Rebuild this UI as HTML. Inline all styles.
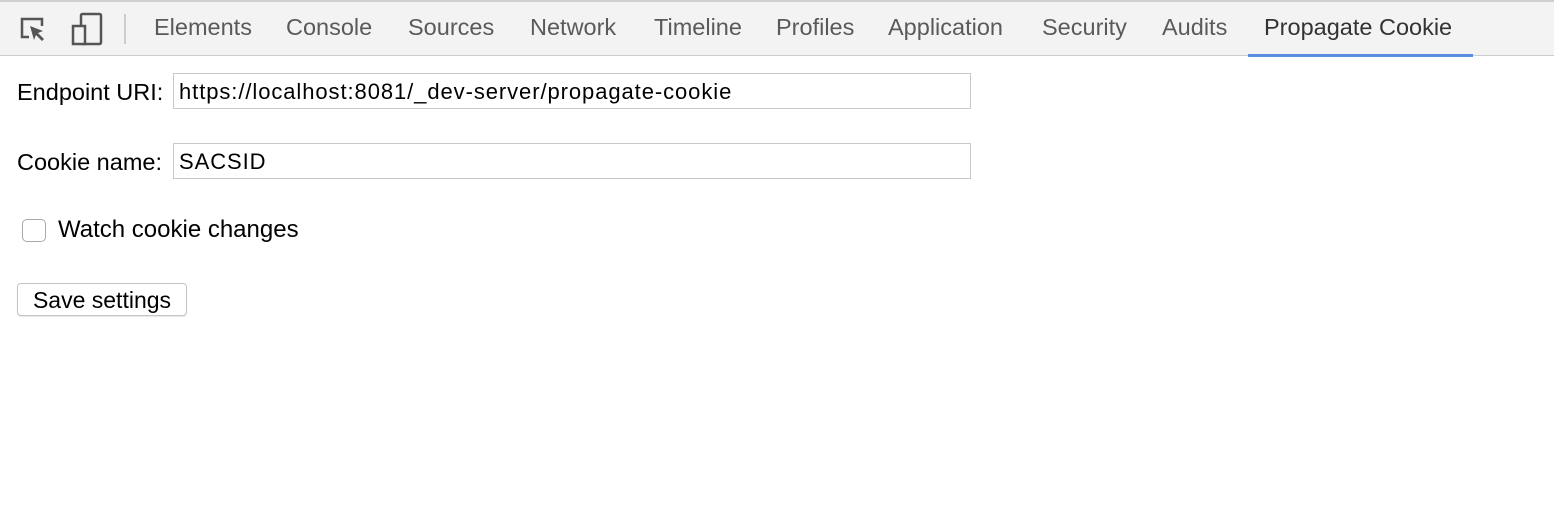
<!DOCTYPE html>
<html><head><style>
body{margin:0;width:1554px;height:510px;background:#fff;font-family:"Liberation Sans",sans-serif;position:relative;overflow:hidden;color:#000}
.bar{position:absolute;left:0;top:0;width:1554px;height:53px;background:#f3f3f3;border-top:2px solid #d0d0d0;border-bottom:1px solid #cdcdcd;box-sizing:content-box}
.t{position:absolute;top:12px;font-size:23.5px;color:#5a5a5a;white-space:nowrap}
.a{color:#333}
.ul{position:absolute;left:1248px;top:52px;width:225px;height:3px;background:#5a8fe0}
.l{position:absolute;font-size:23.5px;white-space:nowrap}
.in{position:absolute;left:173px;width:798px;height:36px;border:1px solid #c8c8c8;box-sizing:border-box;font-size:22px;letter-spacing:0.92px;padding:6px 5px;line-height:24px;white-space:nowrap}
</style></head><body>
<div class="bar">
<svg style="position:absolute;left:18px;top:12px" width="32" height="32" viewBox="0 0 32 32"><path d="M11 23H4V5h20v7" fill="none" stroke="#555" stroke-width="2.5"/><path d="M12 12l13 5-5 2 6 6-2 2-6-6-2 5z" fill="#555"/></svg>
<svg style="position:absolute;left:70px;top:10px" width="34" height="36" viewBox="0 0 34 36"><rect x="11" y="2" width="20" height="30" rx="1.5" fill="none" stroke="#555" stroke-width="2.5"/><rect x="3" y="14" width="12" height="18" fill="#f3f3f3" stroke="#555" stroke-width="2.5"/></svg>
<div style="position:absolute;left:124px;top:12px;width:2px;height:30px;background:#ccc"></div>
<span class="t" style="left:154px">Elements</span>
<span class="t" style="left:286px">Console</span>
<span class="t" style="left:408px">Sources</span>
<span class="t" style="left:530px">Network</span>
<span class="t" style="left:654px">Timeline</span>
<span class="t" style="left:776px">Profiles</span>
<span class="t" style="left:888px">Application</span>
<span class="t" style="left:1042px">Security</span>
<span class="t" style="left:1162px">Audits</span>
<span class="t a" style="left:1264px">Propagate Cookie</span>
<div class="ul"></div>
</div>
<span class="l" style="left:17px;top:79px">Endpoint URI:</span>
<div class="in" style="top:73px">https://localhost:8081/_dev-server/propagate-cookie</div>
<span class="l" style="left:17px;top:149px">Cookie name:</span>
<div class="in" style="top:143px">SACSID</div>
<div style="position:absolute;left:22px;top:219px;width:24px;height:23px;border:1px solid #aaa;border-radius:5px;box-sizing:border-box;background:#fff"></div>
<span class="l" style="left:58px;top:216px;font-size:24px">Watch cookie changes</span>
<div style="position:absolute;left:17px;top:283px;width:170px;height:33px;border:1px solid #c4c4c4;border-radius:4px;box-sizing:border-box;box-shadow:0 1px 1px rgba(0,0,0,.1);font-size:23px;text-align:center;line-height:33px">Save settings</div>
</body></html>
